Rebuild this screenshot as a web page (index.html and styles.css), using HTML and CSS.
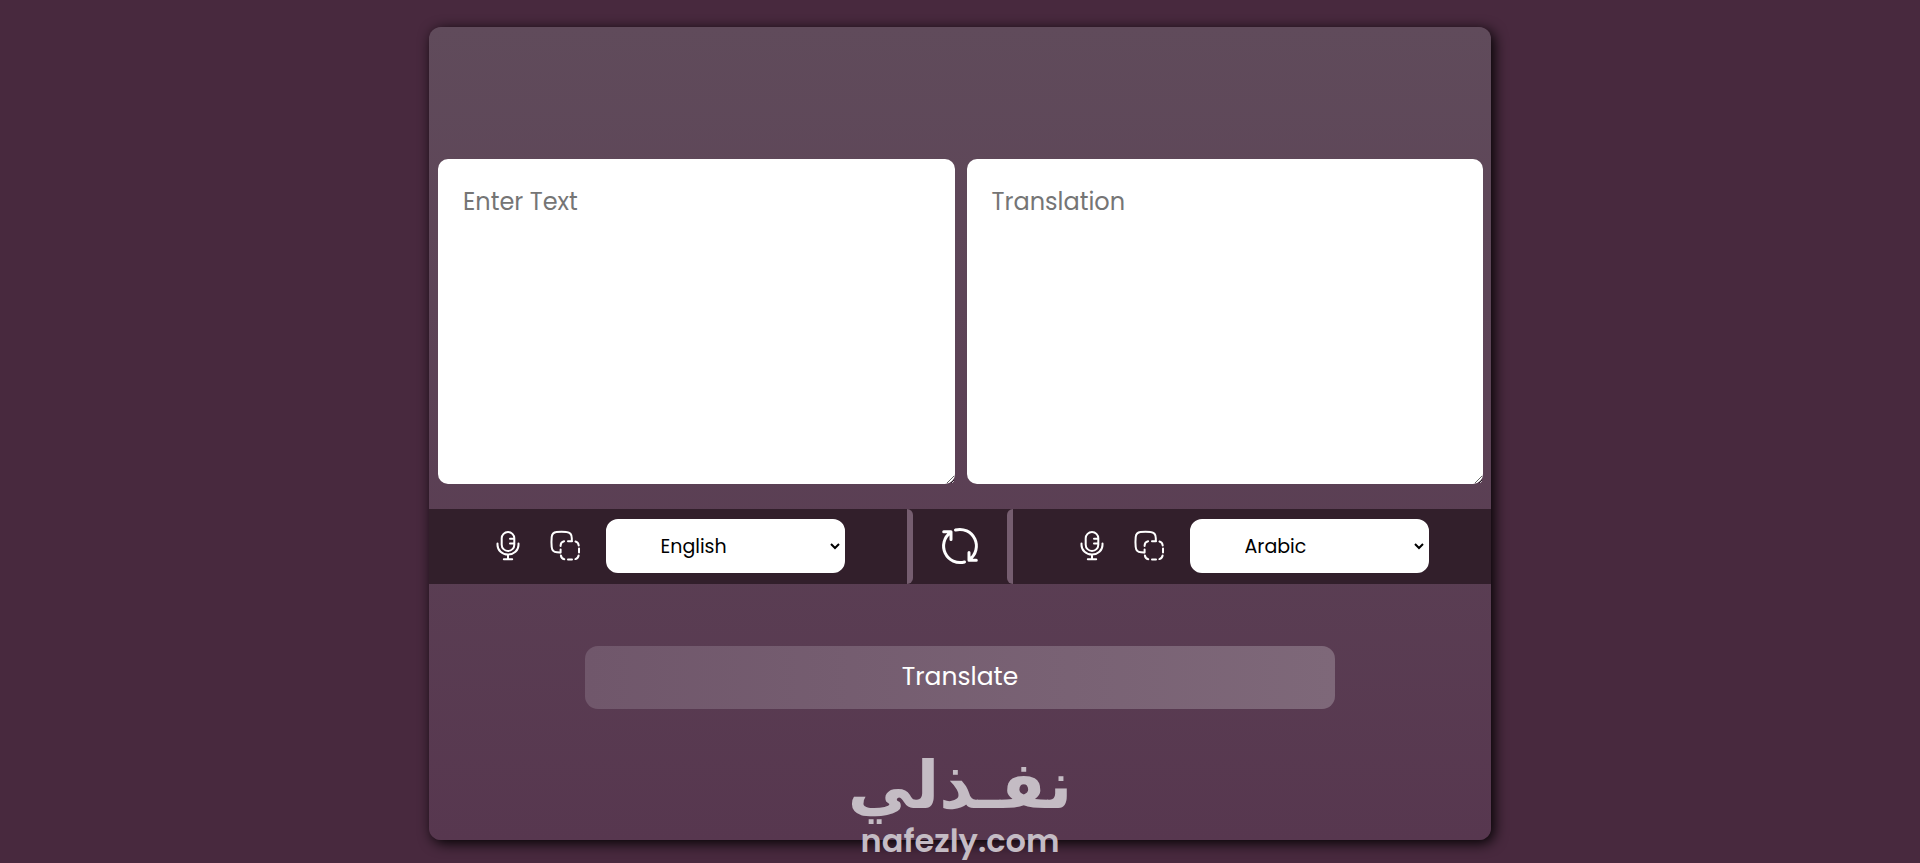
FILE: index.html
```html
<!DOCTYPE html>
<html lang="en">
<head>
    <meta charset="UTF-8">
    <meta name="viewport" content="width=device-width, initial-scale=1.0">
    <title>Translator</title>
    <link rel="stylesheet" href="styles.css">
</head>
<body>
    <!-- shared icons -->
    <svg class="sprite" aria-hidden="true">
        <symbol id="mic" viewBox="0 0 32 32">
            <rect x="9.7" y="2" width="12.6" height="19" rx="6.3"/>
            <path d="M5.5 13.5v1.5a10.5 9.6 0 0 0 21 0v-1.5M16 24.6v4.6M11.8 29.2h8.4M18 8.8h4M18 13.6h4"/>
        </symbol>
        <symbol id="copy" viewBox="0 0 32 32">
            <path d="M22.8 10.6V8.2C22.8 4 21 2.300 17.5 2Q12.5 1.4 7.5 2C4.3 2.4 3 3.9 2.7 7Q2.2 12 2.7 17C3 20.5 4.5 22 8 22.3L11 22.5"/>
            <path d="M11.6 16V15.5a4.5 4.5 0 0 1 3.5-4.2M19 11.2h4M26.5 11.5a4.5 4.5 0 0 1 3.2 4M30 18.5v4M29.6 25.5a4.5 4.5 0 0 1-3.2 3.6M19 29.5h4M15.3 29.2a4.5 4.5 0 0 1-3.4-3.7M11.6 19.5v3"/>
        </symbol>
    </svg>

    <div class="container">
        <div class="text-input">
            <textarea class="from-text" placeholder="Enter Text" aria-label="Enter Text"></textarea>
            <textarea class="to-text" placeholder="Translation" aria-label="Translation"></textarea>
        </div>

        <div class="controls">
            <div class="side from">
                <button class="icon" aria-label="Listen"><svg><use href="#mic"/></svg></button>
                <button class="icon" aria-label="Copy"><svg><use href="#copy"/></svg></button>
                <select aria-label="From language">
                    <option selected>English</option>
                    <option>Arabic</option>
                </select>
            </div>
            <button class="exchange" aria-label="Swap languages">
                <svg viewBox="0 0 40 40">
                    <path d="M15.5 4A16.6 16.6 0 0 1 29.5 33.5M29 26.5v7.7h7.3"/>
                    <path d="M24.5 36A16.6 16.6 0 0 1 10.5 6.5M11 13.5V5.8H3.7"/>
                </svg>
            </button>
            <div class="side to">
                <button class="icon" aria-label="Listen"><svg><use href="#mic"/></svg></button>
                <button class="icon" aria-label="Copy"><svg><use href="#copy"/></svg></button>
                <select aria-label="To language">
                    <option>English</option>
                    <option selected>Arabic</option>
                </select>
            </div>
        </div>

        <button class="translate">Translate</button>
    </div>

    <div class="watermark">
        <span class="mark-ar" lang="ar" dir="rtl">نفـذلي</span>
        <span class="mark-en">nafezly.com</span>
    </div>
</body>
</html>
```

FILE: styles.css
```css
*{
    margin: 0;
    padding: 0;
    box-sizing: border-box;
    font-family: "Poppins", "Inter", sans-serif;
}
body{
    position: relative;
    min-height: 100vh;
    padding: 27px 20px 23px;
    background-color: #48293e;
}
.sprite{
    position: absolute;
    width: 0;
    height: 0;
}
.container{
    max-width: 1062px;
    margin: 0 auto;
    padding: 132px 0 131px;
    border-radius: 12px;
    background: linear-gradient(#604b5b, #57374f);
    box-shadow: 3px 3px 14px #000;
}
.text-input{
    display: flex;
    gap: 12px;
    padding: 0 8px 0 9px;
}
textarea{
    flex: 1;
    min-width: 0;
    height: 325px;
    padding: 24px 25px;
    border: none;
    outline: none;
    border-radius: 10px;
    background-color: #fff;
    font-size: 24px;
    line-height: 38px;
}
textarea::placeholder{
    color: #757575;
}
.controls{
    display: flex;
    height: 75px;
    margin-top: 25px;
    background-color: #321f2b;
}
.side{
    flex: 1;
    display: flex;
    align-items: center;
    justify-content: center;
    gap: 25px;
    padding-bottom: 1px;
}
.from{
    border-right: 6px solid #755d6f;
    border-radius: 0 6px 6px 0;
}
.to{
    border-left: 6px solid #755d6f;
    border-radius: 6px 0 0 6px;
}
button{
    border: none;
    background: none;
    color: #fff;
    cursor: pointer;
}
svg{
    display: block;
    fill: none;
    stroke: #fff;
    stroke-width: 2;
    stroke-linecap: round;
    stroke-linejoin: round;
}
.icon svg{
    width: 32px;
    height: 32px;
}
select{
    width: 50%;
    height: 54px;
    padding: 0 49px;
    border: 2px solid #fff;
    outline: none;
    border-radius: 12px;
    background-color: #fff;
    color: #000;
    font-size: 19px;
}
.exchange{
    display: flex;
    align-items: center;
    justify-content: center;
    width: 94px;
    padding-bottom: 1px;
}
.exchange svg{
    width: 40px;
    height: 40px;
    stroke-width: 3;
}
.translate{
    display: block;
    width: 750px;
    max-width: 90%;
    height: 63px;
    margin: 62px auto 0;
    padding-bottom: 1px;
    border-radius: 13px;
    background: linear-gradient(to right, #70576b, #7e6879);
    font-size: 25px;
}
/* logo laid over the bottom edge of the card */
.watermark{
    position: absolute;
    left: 0;
    right: 0;
    bottom: 0;
    display: flex;
    flex-direction: column;
    align-items: center;
    color: #c4bcc4;
    pointer-events: none;
}
.mark-ar{
    font-family: "DejaVu Sans", sans-serif;
    font-weight: bold;
    font-size: 66px;
    line-height: 66px;
}
.mark-en{
    font-weight: 600;
    font-size: 32px;
    line-height: 44px;
}
```
